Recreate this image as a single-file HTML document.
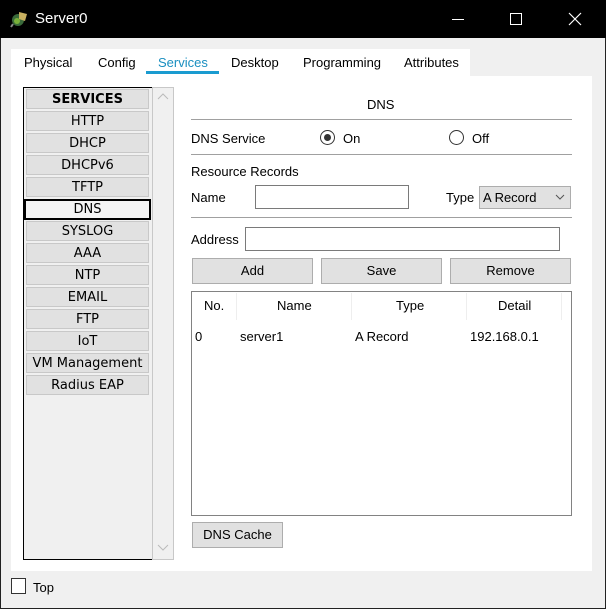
<!DOCTYPE html>
<html><head><style>
*{margin:0;padding:0;box-sizing:border-box}
body{width:606px;height:609px;background:#f0f0f0;font-family:"Liberation Sans",Arial,sans-serif;font-size:13px;color:#000;position:relative;overflow:hidden}
.abs{position:absolute}
.title{left:0;top:0;width:606px;height:38px;background:#000;color:#fff}
.li{position:absolute;left:26px;width:123px;height:20px;background:#e1e1e1;border:1px solid #c8c8c8;font-family:"DejaVu Sans",sans-serif;font-size:13px;text-align:center;line-height:20px}
.hr{position:absolute;left:191px;width:381px;height:1px;background:#a0a0a0}
.btn{position:absolute;background:#e1e1e1;border:1px solid #adadad;text-align:center;line-height:24px;height:26px}
.inp{position:absolute;background:#fff;border:1px solid #7a7a7a}
.t{position:absolute;white-space:nowrap}
.radio{position:absolute;width:15px;height:15px;border:1px solid #333;border-radius:50%;background:#fff}
</style></head><body>
<div class="abs title">
 <svg class="abs" style="left:10px;top:9px" width="20" height="20" viewBox="0 0 20 20"><circle cx="8" cy="11" r="6" fill="#3a6a3a"/><circle cx="7" cy="12" r="3" fill="#79b13a"/><path d="M9 3l8 2-2 7-6-2z" fill="#c8b060"/><path d="M3 15l-2 3" stroke="#888" stroke-width="2"/></svg>
 <div class="t" style="left:35px;top:10px;font-size:15px;color:#fff">Server0</div>
 <div class="abs" style="left:452px;top:19px;width:12px;height:1px;background:#fff"></div>
 <div class="abs" style="left:510px;top:13px;width:12px;height:12px;border:1px solid #fff"></div>
 <svg class="abs" style="left:568px;top:12px" width="14" height="14"><path d="M1 1L13 13M13 1L1 13" stroke="#fff" stroke-width="1.2"/></svg>
</div>
<div class="abs" style="left:0;top:38px;width:1px;height:571px;background:#222"></div>
<div class="abs" style="right:0;top:38px;width:1px;height:571px;background:#222"></div>
<div class="abs" style="left:0;bottom:0;width:606px;height:1px;background:#222"></div>
<div class="abs" style="left:11px;top:49px;width:459px;height:28px;background:#fff"></div>
<div class="abs" style="left:11px;top:76px;width:581px;height:495px;background:#fff"></div>
<div class="t" style="left:24px;top:55px">Physical</div>
<div class="t" style="left:98px;top:55px">Config</div>
<div class="t" style="left:158px;top:55px;color:#1a8fc0">Services</div>
<div class="abs" style="left:146px;top:71px;width:73px;height:3px;background:#1a9bd0"></div>
<div class="t" style="left:231px;top:55px">Desktop</div>
<div class="t" style="left:303px;top:55px">Programming</div>
<div class="t" style="left:404px;top:55px">Attributes</div>
<div class="abs" style="left:23px;top:87px;width:130px;height:473px;background:#f0f0f0;border:1px solid #000"></div>
<div class="abs" style="left:152px;top:87px;width:22px;height:473px;background:#f0f0f0;border:1px solid #c8c8c8"></div>
<svg class="abs" style="left:157px;top:93px" width="12" height="8"><path d="M1 6L6 1L11 6" stroke="#bbb" fill="none"/></svg>
<svg class="abs" style="left:157px;top:544px" width="12" height="8"><path d="M1 1L6 6L11 1" stroke="#bbb" fill="none"/></svg>
<div class="li" style="top:89px;font-weight:bold">SERVICES</div>
<div class="li" style="top:111px">HTTP</div>
<div class="li" style="top:133px">DHCP</div>
<div class="li" style="top:155px">DHCPv6</div>
<div class="li" style="top:177px">TFTP</div>
<div class="li" style="top:199px;left:24px;width:127px;background:#f4f4f4;border:2px solid #000;line-height:18px;height:21px">DNS</div>
<div class="li" style="top:221px">SYSLOG</div>
<div class="li" style="top:243px">AAA</div>
<div class="li" style="top:265px">NTP</div>
<div class="li" style="top:287px">EMAIL</div>
<div class="li" style="top:309px">FTP</div>
<div class="li" style="top:331px">IoT</div>
<div class="li" style="top:353px">VM Management</div>
<div class="li" style="top:375px">Radius EAP</div>
<div class="t" style="left:367px;top:97px">DNS</div>
<div class="hr" style="top:119px"></div>
<div class="t" style="left:191px;top:131px">DNS Service</div>
<div class="radio" style="left:320px;top:130px"><div class="abs" style="left:3px;top:3px;width:7px;height:7px;border-radius:50%;background:#333"></div></div>
<div class="t" style="left:343px;top:131px">On</div>
<div class="radio" style="left:449px;top:130px"></div>
<div class="t" style="left:472px;top:131px">Off</div>
<div class="hr" style="top:154px"></div>
<div class="t" style="left:191px;top:164px">Resource Records</div>
<div class="t" style="left:191px;top:190px">Name</div>
<div class="inp" style="left:255px;top:185px;width:154px;height:24px"></div>
<div class="t" style="left:446px;top:190px">Type</div>
<div class="abs" style="left:479px;top:186px;width:92px;height:23px;background:#e1e1e1;border:1px solid #adadad"></div>
<div class="t" style="left:483px;top:190px">A Record</div>
<svg class="abs" style="left:555px;top:194px" width="10" height="6"><path d="M1 1L5 5L9 1" stroke="#555" fill="none"/></svg>
<div class="hr" style="top:217px"></div>
<div class="t" style="left:191px;top:232px">Address</div>
<div class="inp" style="left:245px;top:227px;width:315px;height:24px"></div>
<div class="btn" style="left:192px;top:258px;width:121px">Add</div>
<div class="btn" style="left:321px;top:258px;width:121px">Save</div>
<div class="btn" style="left:450px;top:258px;width:121px">Remove</div>
<div class="abs" style="left:191px;top:291px;width:381px;height:225px;border:1px solid #828282;background:#fff"></div>
<div class="abs" style="left:236px;top:293px;width:1px;height:27px;background:#eee"></div>
<div class="abs" style="left:351px;top:293px;width:1px;height:27px;background:#eee"></div>
<div class="abs" style="left:466px;top:293px;width:1px;height:27px;background:#eee"></div>
<div class="abs" style="left:561px;top:293px;width:1px;height:27px;background:#eee"></div>
<div class="t" style="left:204px;top:298px">No.</div>
<div class="t" style="left:277px;top:298px">Name</div>
<div class="t" style="left:396px;top:298px">Type</div>
<div class="t" style="left:498px;top:298px">Detail</div>
<div class="t" style="left:195px;top:329px">0</div>
<div class="t" style="left:240px;top:329px">server1</div>
<div class="t" style="left:355px;top:329px">A Record</div>
<div class="t" style="left:470px;top:329px">192.168.0.1</div>
<div class="btn" style="left:192px;top:522px;width:91px">DNS Cache</div>
<div class="abs" style="left:11px;top:578px;width:15px;height:16px;border:1px solid #333;background:#fff"></div>
<div class="t" style="left:33px;top:580px">Top</div>
</body></html>
